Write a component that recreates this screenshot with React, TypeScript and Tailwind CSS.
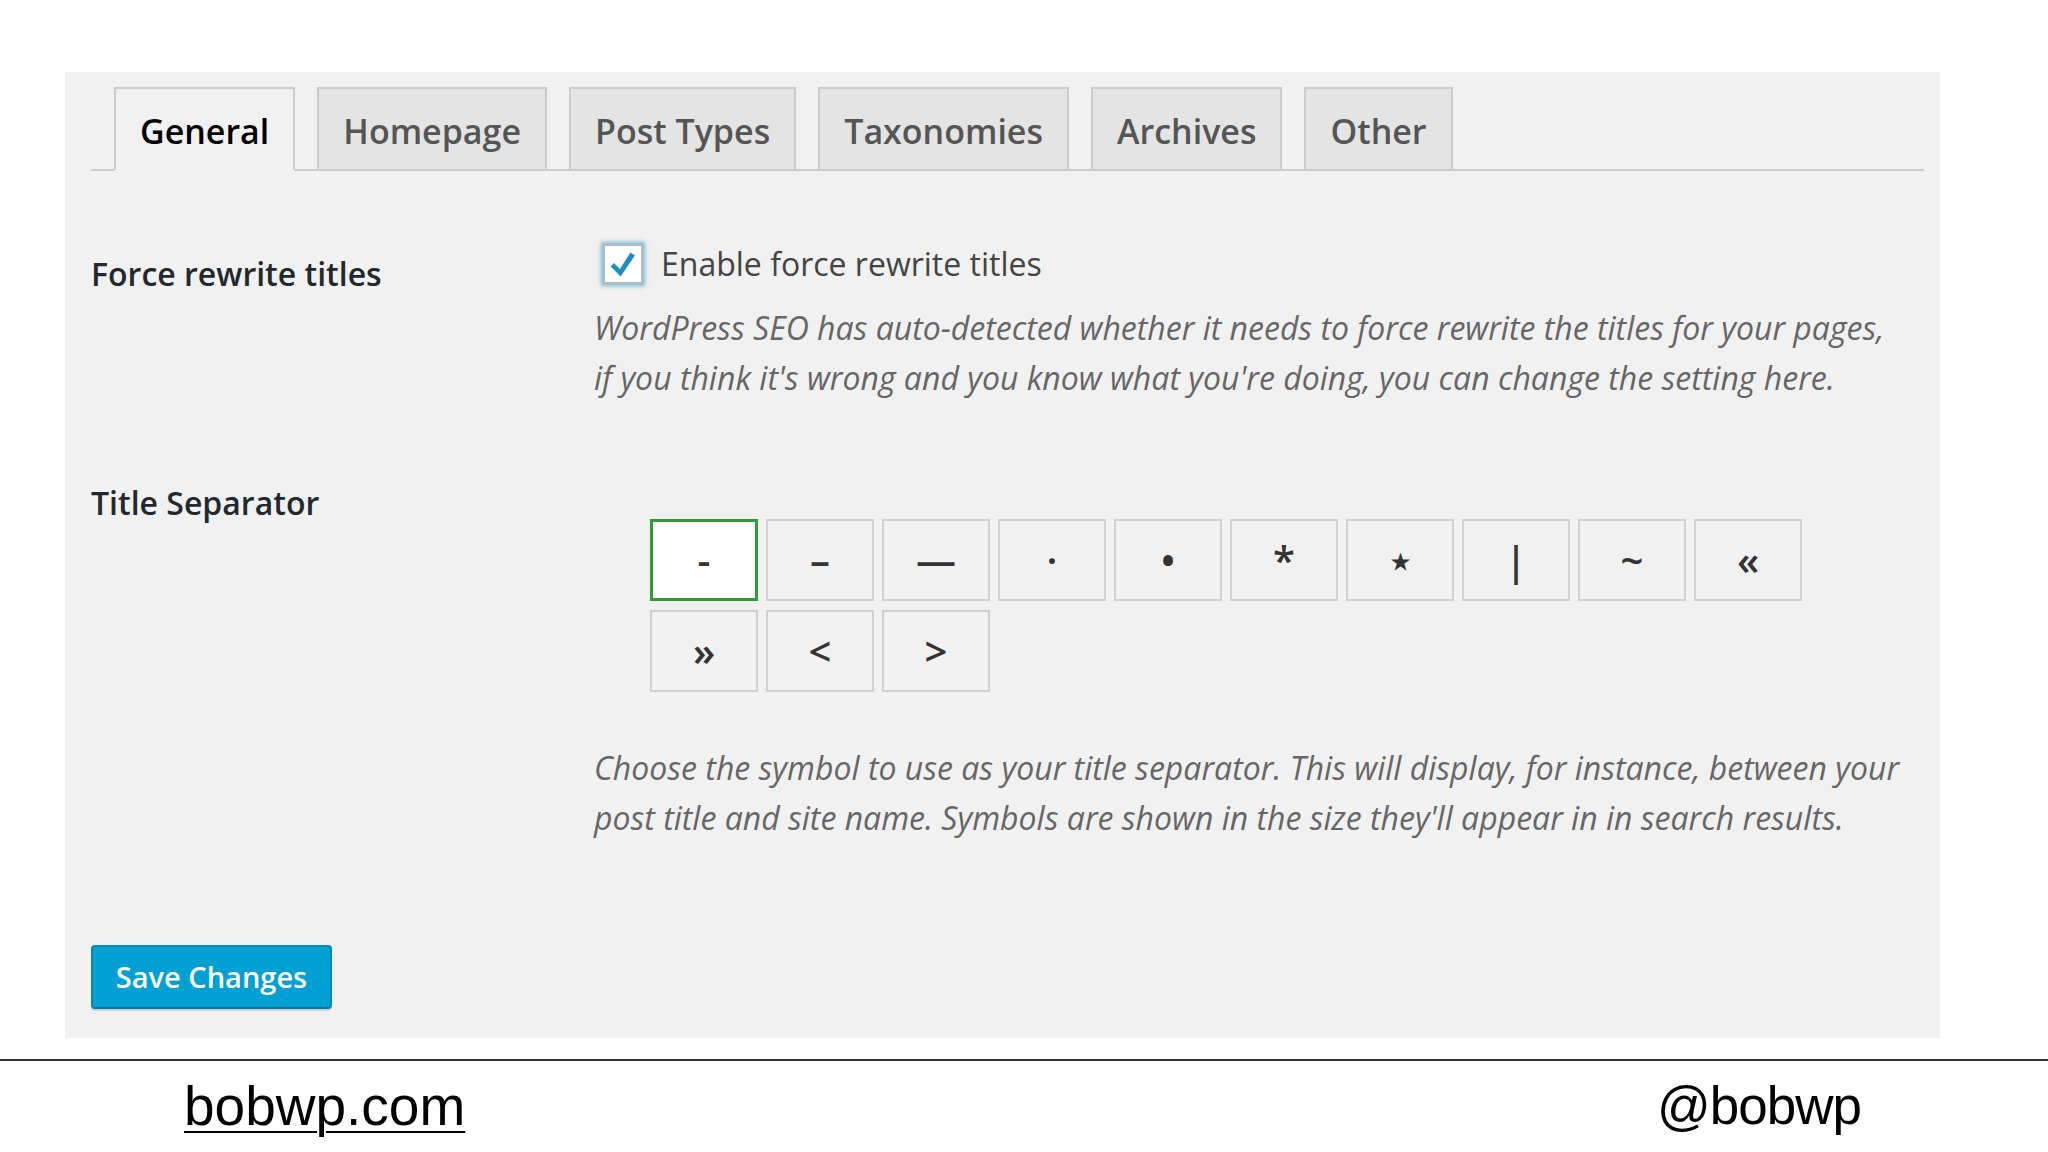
import React from 'react';

const tabs = ['General', 'Homepage', 'Post Types', 'Taxonomies', 'Archives', 'Other'];

const separators = ['-', '–', '—', '·', '•', '*', '⋆', '|', '~', '«', '»', '<', '>'];

function CheckIcon() {
  return (
    <svg viewBox="0 0 20 20" className="w-[34px] h-[34px]">
      <path d="M4.6 9.4 L8.2 12.9 L14.4 3.2 L17 5 L8.6 17.4 L2.8 11.4 Z" fill="#1e8cbe" />
    </svg>
  );
}

export default function App() {
  return (
    <div className="w-[2048px] h-[1152px] bg-white font-['Open_Sans',sans-serif] overflow-hidden">
      <div className="pt-[72px] pl-[65px]">
        <div className="w-[1875px] h-[966px] bg-[#f1f1f1] pl-[26px] pr-[16px] pt-[17px]">
          {/* tabs */}
          <div className="flex items-end gap-[22px] pl-[23px] h-[82px] border-b-2 border-[#cccccc]">
            {tabs.map((t, i) => (
              <div
                key={t}
                className={
                  i === 0
                    ? 'h-[84px] -mb-[2px] flex items-center pt-[4px] px-[24px] border-2 border-[#cccccc] border-b-[#f1f1f1] bg-[#f1f1f1] text-[34px] font-semibold text-black'
                    : 'h-[84px] -mb-[2px] flex items-center pt-[4px] px-[24px] border-2 border-[#cccccc] bg-[#e4e4e4] text-[34px] font-semibold text-[#555555]'
                }
              >
                {t}
              </div>
            ))}
          </div>

          {/* force rewrite titles */}
          <div className="flex mt-[69px]">
            <div className="w-[503px] pt-[14px] text-[32px] leading-[40px] font-semibold text-[#23282d]">
              Force rewrite titles
            </div>
            <div>
              <div className="h-[48px] flex items-center">
                <div className="ml-[9px] w-[40px] h-[40px] bg-white border-2 border-[#b4b9be] shadow-[0_0_4px_2px_rgba(30,140,190,0.55)] flex items-center justify-center">
                  <CheckIcon />
                </div>
                <span className="ml-[18px] text-[32px] text-[#444444]">Enable force rewrite titles</span>
              </div>
              <p className="mt-[15px] text-[32px] leading-[50px] italic text-[#666666] whitespace-nowrap">
                WordPress SEO has auto-detected whether it needs to force rewrite the titles for your pages,
                <br />
                if you think it's wrong and you know what you're doing, you can change the setting here.
              </p>
            </div>
          </div>

          {/* title separator */}
          <div className="flex mt-[80px]">
            <div className="w-[503px] text-[32px] leading-[40px] font-semibold text-[#23282d]">
              Title Separator
            </div>
            <div>
              <div className="ml-[56px] mt-[36px] grid grid-cols-[repeat(10,108px)] gap-x-[8px] gap-y-[9px]">
                {separators.map((s, i) => (
                  <div
                    key={i}
                    className={
                      i === 0
                        ? 'h-[82px] flex items-center justify-center bg-white border-[3px] border-[#2f9a37] text-[40px] font-semibold text-[#333333]'
                        : 'h-[82px] flex items-center justify-center border-2 border-[#d0d0d0] text-[40px] font-semibold text-[#333333]'
                    }
                  >
                    {s}
                  </div>
                ))}
              </div>
              <p className="mt-[51px] text-[32px] leading-[50px] italic text-[#666666] whitespace-nowrap">
                Choose the symbol to use as your title separator. This will display, for instance, between your
                <br />
                post title and site name. Symbols are shown in the size they'll appear in in search results.
              </p>
            </div>
          </div>

          <button className="mt-[102px] w-[241px] h-[64px] rounded-[4px] bg-[#00a0d2] border-2 border-[#0089bd] border-b-[#0073aa] shadow-[0_2px_0_rgba(0,0,0,0.12)] text-white text-[29px] font-semibold flex items-center justify-center">
            Save Changes
          </button>
        </div>
      </div>

      {/* footer */}
      <div className="mt-[21px] border-t-2 border-[#333333] font-['Liberation_Sans',Arial,sans-serif] text-black">
        <div className="flex justify-between items-center h-[90px] pl-[184px] pr-[187px]">
          <span className="text-[55px] underline underline-offset-[6px] decoration-2">bobwp.com</span>
          <span className="text-[53px] tracking-[-1px]">@bobwp</span>
        </div>
      </div>
    </div>
  );
}
